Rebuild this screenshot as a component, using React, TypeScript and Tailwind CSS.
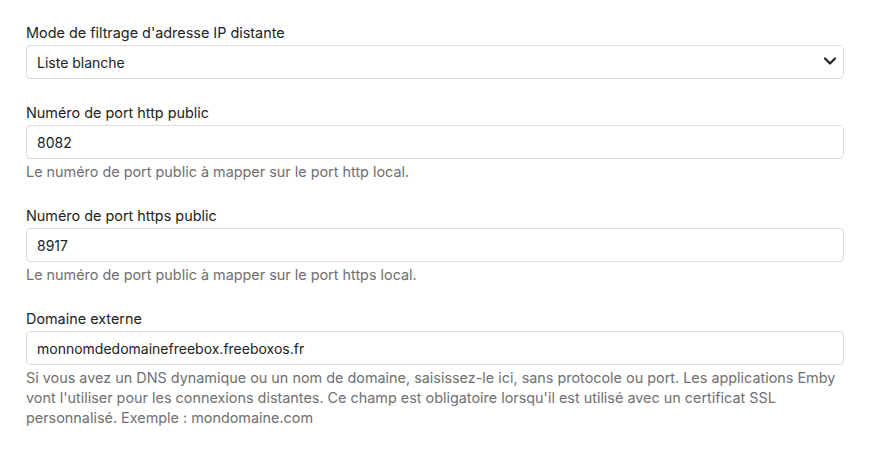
import { ChevronDown } from "lucide-react";

interface FieldProps {
  label: string;
  value: string;
  help?: string;
  select?: boolean;
}

const Field: React.FC<FieldProps> = ({ label, value, help, select }) => {
  return (
    <div className="mb-6">
      <label className="block text-[14.4px] leading-5 text-[#222222] mb-0.5">
        {label}
      </label>
      {select ? (
        <div className="relative">
          <select
            defaultValue={value}
            className="w-full h-[34px] appearance-none rounded border border-[#dcdcdc] bg-white pl-[10px] pr-8 text-[14px] text-[#222222] outline-none"
          >
            <option>{value}</option>
            <option>Liste noire</option>
          </select>
          <ChevronDown
            size={20}
            strokeWidth={2.6}
            className="pointer-events-none absolute right-1 top-[6px] text-[#222222]"
          />
        </div>
      ) : (
        <input
          type="text"
          readOnly
          value={value}
          className="block w-full h-[34px] rounded border border-[#dcdcdc] bg-white px-[10px] text-[14px] text-[#222222] outline-none"
        />
      )}
      {help && (
        <p className="mt-[3px] text-[14.4px] leading-5 text-[#707070]">{help}</p>
      )}
    </div>
  );
};

export default function App() {
  return (
    <div
      className="min-h-[450px] bg-white px-[26px] pt-[23px]"
      style={{ fontFamily: "Inter, 'Noto Sans', sans-serif" }}
    >
      <Field
        label="Mode de filtrage d'adresse IP distante"
        value="Liste blanche"
        select
      />
      <Field
        label="Numéro de port http public"
        value="8082"
        help="Le numéro de port public à mapper sur le port http local."
      />
      <Field
        label="Numéro de port https public"
        value="8917"
        help="Le numéro de port public à mapper sur le port https local."
      />
      <Field
        label="Domaine externe"
        value="monnomdedomainefreebox.freeboxos.fr"
        help="Si vous avez un DNS dynamique ou un nom de domaine, saisissez-le ici, sans protocole ou port. Les applications Emby vont l'utiliser pour les connexions distantes. Ce champ est obligatoire lorsqu'il est utilisé avec un certificat SSL personnalisé. Exemple : mondomaine.com"
      />
    </div>
  );
}
